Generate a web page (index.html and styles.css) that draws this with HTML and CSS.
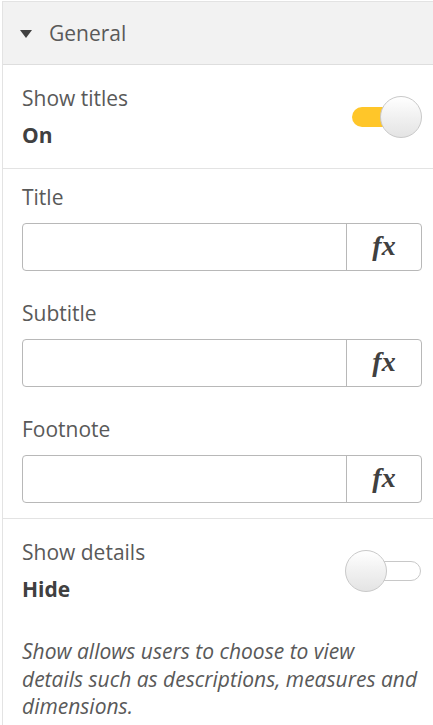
FILE: index.html
```html
<!DOCTYPE html>
<html>
<head>
<meta charset="utf-8">
<link rel="stylesheet" href="styles.css">
</head>
<body>
<div class="panel">
  <div class="header">
    <span class="caret"></span>
    <span class="header-title">General</span>
  </div>
  <div class="section toggle-section">
    <div class="toggle-text">
      <div class="label">Show titles</div>
      <div class="value">On</div>
    </div>
    <div class="switch on"><span class="track"></span><span class="knob"></span></div>
  </div>
  <div class="section fields">
    <div class="field">
      <div class="label">Title</div>
      <div class="input"><span class="input-text"></span><span class="fx">fx</span></div>
    </div>
    <div class="field">
      <div class="label">Subtitle</div>
      <div class="input"><span class="input-text"></span><span class="fx">fx</span></div>
    </div>
    <div class="field">
      <div class="label">Footnote</div>
      <div class="input"><span class="input-text"></span><span class="fx">fx</span></div>
    </div>
  </div>
  <div class="section last">
    <div class="toggle-row">
      <div class="toggle-text">
        <div class="label">Show details</div>
        <div class="value">Hide</div>
      </div>
      <div class="switch off"><span class="track"></span><span class="knob"></span></div>
    </div>
    <p class="desc">Show allows users to choose to view<br>details such as descriptions, measures and dimensions.</p>
  </div>
</div>
</body>
</html>
```
FILE: styles.css
```css
html, body {
  margin: 0;
  padding: 0;
  background: #ffffff;
}
body {
  font-family: "Open Sans", sans-serif;
  color: #595959;
  overflow: hidden;
}
.panel {
  margin-left: 2px;
  margin-top: 1px;
  border-left: 1px solid #e3e3e3;
  border-top: 1px solid #e3e3e3;
  height: 730px;
}
.header {
  height: 62px;
  background: #f2f2f2;
  border-bottom: 1px solid #dedede;
  display: flex;
  align-items: center;
  padding-left: 17px;
}
.caret {
  width: 0;
  height: 0;
  border-left: 6.5px solid transparent;
  border-right: 6.5px solid transparent;
  border-top: 8px solid #404040;
  margin-right: 17px;
  margin-top: 1px;
}
.header-title {
  font-size: 21px;
  color: #595959;
}
.section {
  border-bottom: 1px solid #e3e3e3;
  padding: 0 11px 0 19px;
}
.section.last {
  border-bottom: none;
}
.toggle-section {
  height: 103px;
  display: flex;
  align-items: center;
  justify-content: space-between;
}
.toggle-text {
  display: flex;
  flex-direction: column;
}
.label {
  font-size: 21px;
  line-height: 28px;
  color: #595959;
}
.value {
  font-size: 21px;
  line-height: 28px;
  font-weight: 700;
  color: #404040;
  margin-top: 9px;
}
.switch {
  position: relative;
  width: 77px;
  height: 42px;
}
.track {
  position: absolute;
  left: 7px;
  right: 1px;
  top: 11px;
  height: 20px;
  border-radius: 10px;
  box-sizing: border-box;
}
.switch.on .track {
  background: #ffc629;
}
.switch.off .track {
  background: #ffffff;
  border: 1px solid #c8c8c8;
}
.knob {
  position: absolute;
  top: 0;
  width: 42px;
  height: 42px;
  box-sizing: border-box;
  border-radius: 50%;
  border: 1px solid #c9c9c9;
  background: linear-gradient(#ffffff, #f2f2f2 45%, #e4e4e4);
}
.switch.on .knob { right: 0; }
.switch.off .knob { left: 0; }
.fields {
  padding-top: 14px;
  padding-bottom: 15px;
  display: flex;
  flex-direction: column;
  gap: 28px;
}
.field .label {
  margin-bottom: 12px;
}
.input {
  height: 48px;
  box-sizing: border-box;
  border: 1px solid #b8b8b8;
  border-radius: 4px;
  display: flex;
}
.input-text {
  flex: 1;
}
.fx {
  width: 75px;
  border-left: 1px solid #b8b8b8;
  display: flex;
  align-items: center;
  justify-content: center;
  font-family: "Liberation Serif", serif;
  font-style: italic;
  font-weight: 700;
  font-size: 28px;
  color: #404040;
  padding-bottom: 2px;
  box-sizing: border-box;
}
.last {
  padding-top: 19px;
}
.toggle-row {
  display: flex;
  align-items: center;
  justify-content: space-between;
}
.desc {
  margin: 35px 0 0 0;
  font-style: italic;
  font-size: 21px;
  line-height: 27.5px;
  color: #595959;
}
```
